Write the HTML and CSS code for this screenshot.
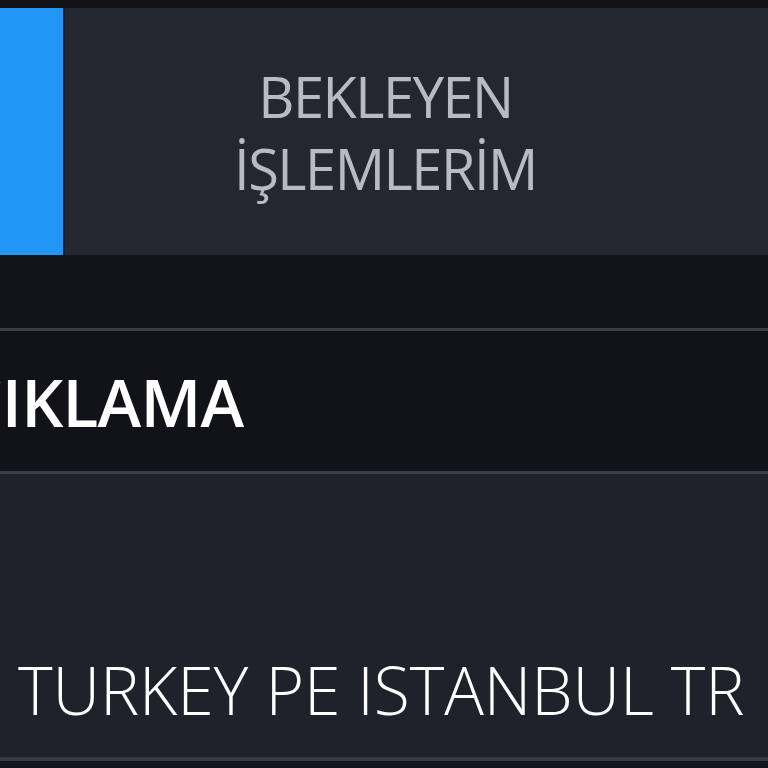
FILE: index.html
```html
<!DOCTYPE html>
<html lang="tr">
<head>
<meta charset="utf-8">
<title>Bekleyen İşlemlerim</title>
<link rel="stylesheet" href="styles.css">
</head>
<body>
<div class="page">
  <div class="topbar"></div>
  <div class="tabs">
    <div class="tab tab-active"></div>
    <div class="tab-sep"></div>
    <div class="tab tab-pending">
      <span class="tab-label">BEKLEYEN<br>İŞLEMLERİM</span>
    </div>
  </div>
  <div class="spacer"></div>
  <div class="table">
    <div class="table-head">
      <span class="head-cell">AÇIKLAMA</span>
    </div>
    <div class="table-row">
      <span class="row-cell">TURKEY PE ISTANBUL TR</span>
    </div>
  </div>
  <div class="bottom"></div>
</div>
</body>
</html>
```

FILE: styles.css
```css
html, body {
  margin: 0;
  padding: 0;
  background: #14141b;
  overflow: hidden;
}

.page {
  width: 768px;
  height: 768px;
  display: flex;
  flex-direction: column;
  font-family: "Open Sans", "Noto Sans", sans-serif;
  overflow: hidden;
}

.topbar {
  height: 8px;
  background: #111117;
  flex: none;
}

.tabs {
  display: flex;
  height: 247px;
  flex: none;
}

.tab-active {
  width: 63px;
  background: #2196f5;
  flex: none;
}

.tab-sep {
  width: 2px;
  background: #1a1c23;
  flex: none;
}

.tab-pending {
  flex: 1;
  background: #242730;
  display: flex;
  align-items: center;
  justify-content: center;
  padding-right: 62px;
}

.tab-label {
  color: #b8bbc3;
  font-size: 56px;
  line-height: 72px;
  letter-spacing: -1.5px;
  text-align: center;
  font-weight: 400;
}

.spacer {
  height: 73px;
  background: #13131a;
  flex: none;
}

.table {
  display: flex;
  flex-direction: column;
}

.table-head {
  height: 140px;
  border-top: 3px solid #393c45;
  background: #121219;
  display: flex;
  align-items: center;
  overflow: hidden;
}

.head-cell {
  color: #ffffff;
  font-size: 66px;
  font-weight: 600;
  margin-left: -82px;
  white-space: nowrap;
  letter-spacing: -0.8px;
}

.table-row {
  height: 283px;
  border-top: 3px solid #393c45;
  background: #1f222a;
  display: flex;
  align-items: flex-end;
  padding-left: 18px;
}

.row-cell {
  color: #ffffff;
  font-size: 66px;
  font-weight: 300;
  letter-spacing: -0.1px;
  white-space: nowrap;
  line-height: 1;
  padding-bottom: 35px;
}

.bottom {
  flex: 1;
  border-top: 4px solid #373a43;
  background: #15161c;
}
```
